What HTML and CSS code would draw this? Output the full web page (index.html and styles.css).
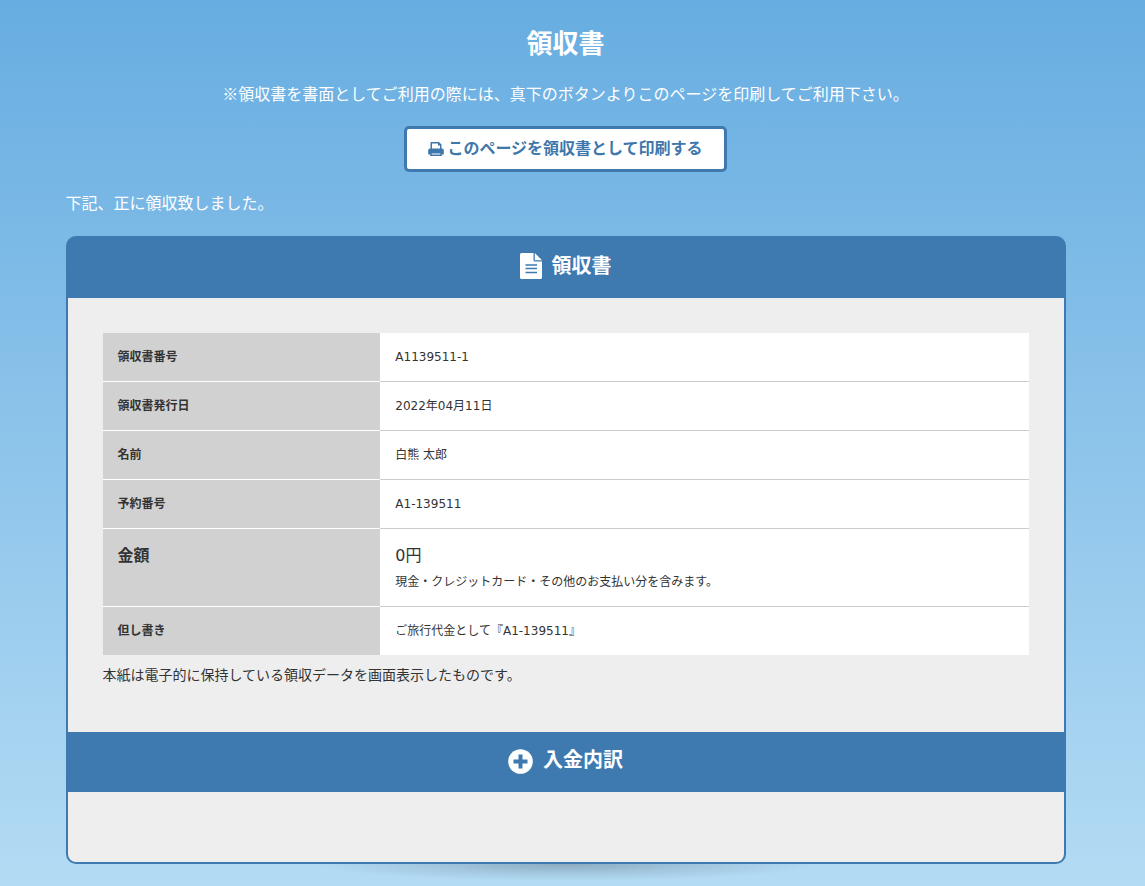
FILE: index.html
```html
<!DOCTYPE html>
<html lang="ja">
<head>
<meta charset="utf-8">
<meta name="viewport" content="width=device-width, initial-scale=1">
<title>領収書</title>
<link rel="stylesheet" href="styles.css">
</head>
<body>
<main class="page">
  <h1 class="page-title">領収書</h1>
  <p class="notice">※領収書を書面としてご利用の際には、真下のボタンよりこのページを印刷してご利用下さい。</p>
  <button type="button" class="print-button">
    <svg class="print-icon" viewBox="0 0 16 16" aria-hidden="true">
      <path fill="currentColor" fill-rule="evenodd" d="M3 1h8l2.500 2.500V7.500H14a1.800 1.800 0 0 1 1.800 1.800V13.500h-2V15H2.200v-1.500h-2V9.300A1.800 1.800 0 0 1 2 7.500h.500V1.500A.5.5 0 0 1 3 1zM4 2.500v5h8V4.500H10V2.500zM3.700 12.600v1h8.600v-1z"/>
    </svg>このページを領収書として印刷する
  </button>
  <p class="lead">下記、正に領収致しました。</p>

  <div class="card">
    <h2 class="card-heading">
      <svg class="icon-file" viewBox="0 0 22 26" aria-hidden="true">
        <path fill="#fff" d="M1.500 0H13.500v7A1.500 1.500 0 0 0 15 8.500H22v16a1.500 1.500 0 0 1-1.500 1.500h-19A1.500 1.500 0 0 1 0 24.500v-23A1.500 1.500 0 0 1 1.500 0zM14.800 0l7.200 7.200h-7.200z"/>
        <path stroke="#3e7ab0" stroke-width="1.500" d="M5.500 12h11.500M5.500 15.500h11.500M5.500 19.500h11.500"/>
      </svg>
      <span>領収書</span>
    </h2>
    <div class="card-body">
      <table class="details">
        <tr><th scope="row">領収書番号</th><td>A1139511-1</td></tr>
        <tr><th scope="row">領収書発行日</th><td>2022年04月11日</td></tr>
        <tr><th scope="row">名前</th><td>白熊 太郎</td></tr>
        <tr><th scope="row">予約番号</th><td>A1-139511</td></tr>
        <tr class="amount-row"><th scope="row">金額</th><td><span class="amount">0円</span><span class="amount-note">現金・クレジットカード・その他のお支払い分を含みます。</span></td></tr>
        <tr><th scope="row">但し書き</th><td>ご旅行代金として『A1-139511』</td></tr>
      </table>
      <p class="remark">本紙は電子的に保持している領収データを画面表示したものです。</p>
    </div>
    <h2 class="card-heading">
      <svg class="icon-plus" viewBox="0 0 25 27" aria-hidden="true">
        <circle cx="12.500" cy="14.500" r="12.300" fill="#fff"/>
        <path stroke="#3e7ab0" stroke-width="4" d="M12.500 7.500v14M5.500 14.500h14"/>
      </svg>
      <span>入金内訳</span>
    </h2>
    <div class="card-footer"></div>
  </div>
</main>
</body>
</html>
```
FILE: styles.css
```css
* { box-sizing: border-box; }

html { min-height: 100%; }

body {
  min-height: 100vh;
  margin: 0;
  padding: 0 14px 0 0;
  color: #333;
  background: linear-gradient(#67ade1, #b3dbf4);
  font-family: "DejaVu Sans", "Noto Sans CJK JP", sans-serif;
  font-size: 16px;
  line-height: 24px;
}

.page {
  display: flex;
  flex-direction: column;
  align-items: center;
  max-width: 1000px;
  margin: 0 auto;
  padding: 25px 0 22px;
  color: #fff;
}

.page-title {
  margin: 0;
  font-size: 26px;
  line-height: 38px;
}

.notice {
  margin: 18px 0 21px;
  font-family: "Noto Sans CJK JP", sans-serif;
}

.print-button {
  display: flex;
  align-items: center;
  justify-content: center;
  gap: 3px;
  height: 46px;
  padding: 0 21px;
  border: 3px solid #4079ad;
  border-radius: 5px;
  color: #3e77ab;
  background: #fff;
  font: inherit;
  font-weight: bold;
  cursor: pointer;
}

.print-icon { width: 16px; height: 16px; }

.lead {
  align-self: flex-start;
  margin: 20px 0;
}

.card {
  position: relative;
  width: 100%;
  border: 2px solid #3e7ab0;
  border-radius: 10px;
  color: #333;
  background: #3e7ab0;
}

.card::after {
  content: "";
  position: absolute;
  top: calc(100% + 2px);
  left: 25%;
  right: 25%;
  height: 17px;
  background: radial-gradient(ellipse 50% 100% at 50% 0, rgba(60, 70, 80, .32), rgba(60, 70, 80, .14) 50%, transparent);
}

.card-heading {
  display: flex;
  align-items: center;
  justify-content: center;
  gap: 10px;
  height: 60px;
  margin: 0;
  padding-bottom: 4px;
  color: #fff;
  font-size: 20px;
  line-height: 30px;
}

.icon-file { width: 22px; height: 26px; }
.icon-plus { width: 25px; height: 27px; }

.card-body {
  padding: 35px 35px 44px;
  background: #eee;
}

.details {
  width: 100%;
  border-collapse: separate;
  border-spacing: 0;
  background: #fff;
  font-size: 12px;
  line-height: 18px;
}

.details th,
.details td {
  padding: 15px;
  border-bottom: 1px solid #ccc;
  text-align: left;
  vertical-align: top;
}

.details th {
  width: 30%;
  border-bottom-color: #fff;
  background: #d1d1d1;
}

.details tr:last-child th,
.details tr:last-child td { border-bottom: 0; }

.details .amount-row th,
.amount {
  font-size: 16px;
  line-height: 24px;
}

.amount,
.amount-note { display: block; }

.amount-note { margin-top: 5px; }

.remark {
  margin: 8px 0 0;
  font-size: 14px;
  line-height: 25px;
}

.card-footer {
  height: 70px;
  border-radius: 0 0 8px 8px;
  background: #eee;
}
```
